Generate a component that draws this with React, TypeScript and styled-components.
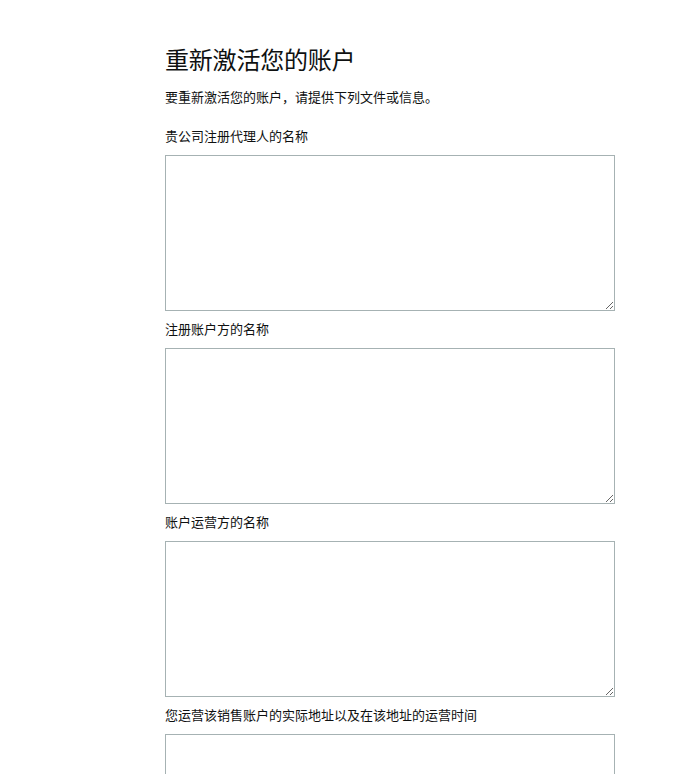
import React from "react";
import styled, { createGlobalStyle } from "styled-components";

const GlobalStyle = createGlobalStyle`
  html, body {
    margin: 0;
    padding: 0;
    background: #ffffff;
  }
  body {
    font-family: "Noto Sans CJK SC", "Noto Sans", "Liberation Sans", sans-serif;
    color: #0f1111;
  }
`;

const Page = styled.div`
  padding: 41px 0 0 165px;
`;

const Form = styled.form`
  width: 450px;
  display: flex;
  flex-direction: column;
`;

const Title = styled.h1`
  margin: 0;
  font-size: 24px;
  font-weight: 400;
  line-height: 36px;
  letter-spacing: -0.2px;
`;

const Intro = styled.p`
  margin: 10px 0 0;
  font-size: 13px;
  line-height: 19px;
`;

const Field = styled.div<{ $first?: boolean }>`
  display: flex;
  flex-direction: column;
  margin-top: ${p => (p.$first ? "20px" : "8px")};
`;

const Label = styled.label`
  font-size: 13px;
  line-height: 19px;
  margin-bottom: 10px;
`;

const TextArea = styled.textarea`
  box-sizing: border-box;
  width: 450px;
  height: 156px;
  margin: 0;
  padding: 6px 8px;
  border: 1px solid #a6b2b3;
  border-radius: 0;
  font-family: inherit;
  font-size: 13px;
  color: #0f1111;
  resize: vertical;
  outline: none;
`;

const fields = [
  "贵公司注册代理人的名称",
  "注册账户方的名称",
  "账户运营方的名称",
  "您运营该销售账户的实际地址以及在该地址的运营时间",
];

const App = (): JSX.Element => (
  <Page>
    <GlobalStyle />
    <Form>
      <Title>重新激活您的账户</Title>
      <Intro>要重新激活您的账户，请提供下列文件或信息。</Intro>
      {fields.map((label, i) => (
        <Field key={i} $first={i === 0}>
          <Label htmlFor={`field-${i}`}>{label}</Label>
          <TextArea id={`field-${i}`} />
        </Field>
      ))}
    </Form>
  </Page>
);

export default App;
